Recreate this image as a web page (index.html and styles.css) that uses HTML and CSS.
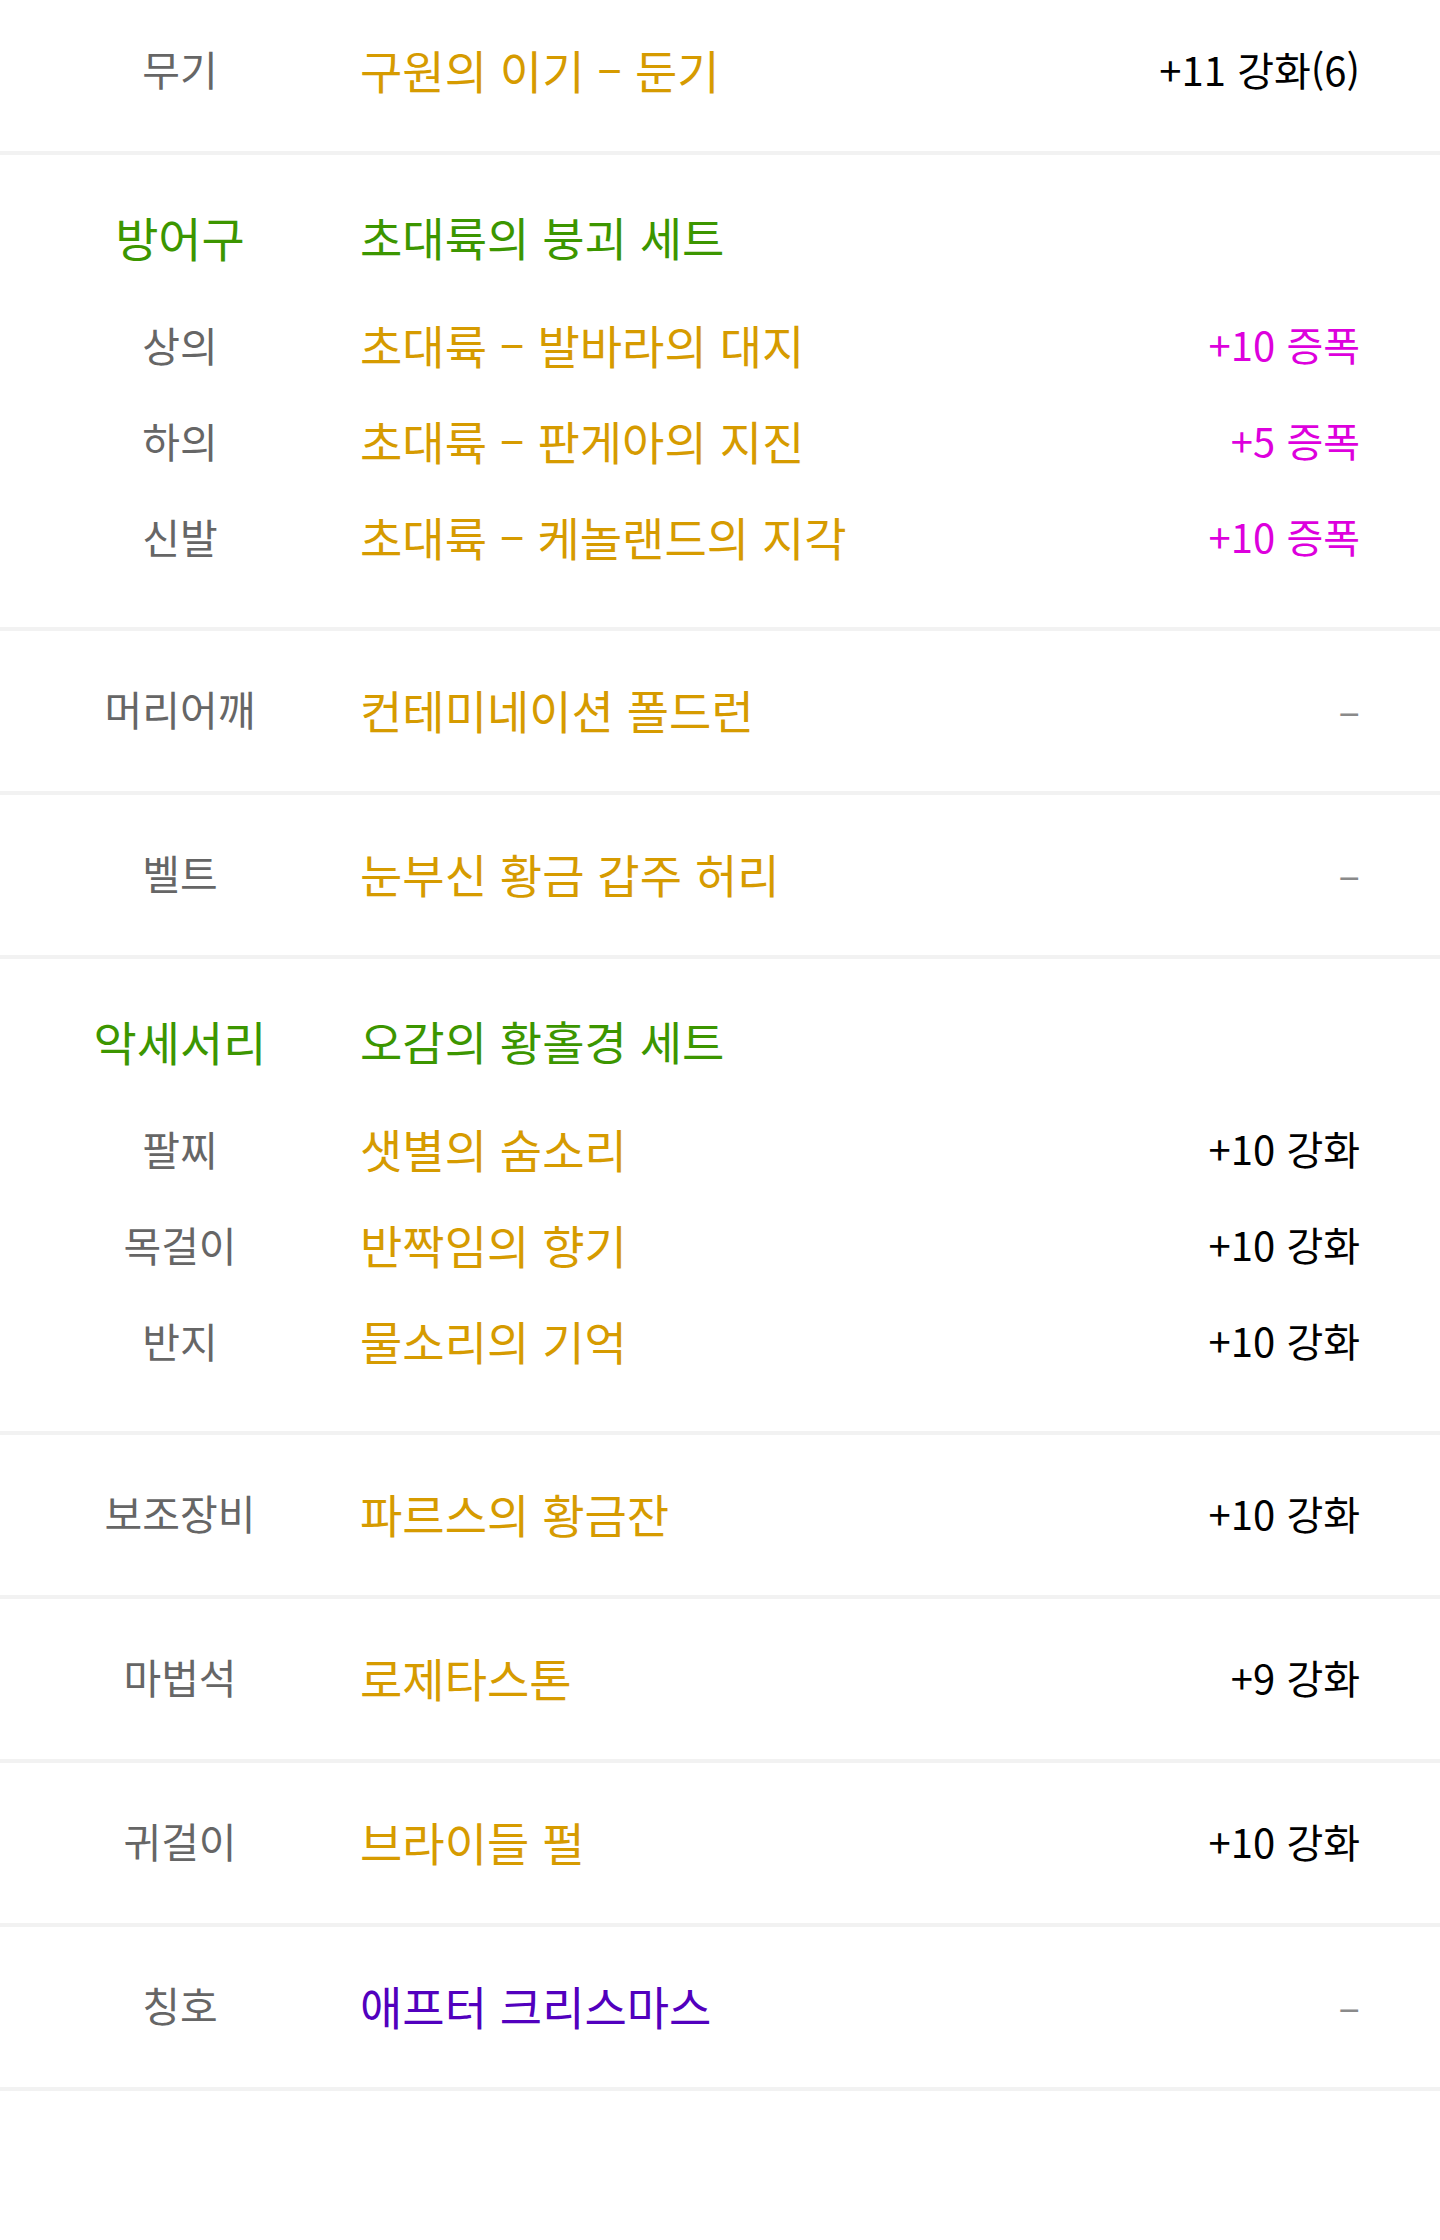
FILE: index.html
```html
<!DOCTYPE html>
<html lang="ko">
<head>
<meta charset="UTF-8">
<meta name="viewport" content="width=device-width, initial-scale=1.0">
<title>장비 목록</title>
<link rel="stylesheet" href="styles.css">
</head>
<body>

  <div class="equip-list">

    <div class="slot">
      <span class="slot-label">무기</span>
      <span class="item-name">구원의 이기 – 둔기</span>
      <span class="item-value">+11 강화(6)</span>
    </div>

    <div class="set-group">
      <div class="set-head">
        <span class="set-label">방어구</span>
        <span class="set-name">초대륙의 붕괴 세트</span>
      </div>
      <div class="set-row">
        <span class="slot-label">상의</span>
        <span class="item-name">초대륙 – 발바라의 대지</span>
        <span class="item-value amplify">+10 증폭</span>
      </div>
      <div class="set-row">
        <span class="slot-label">하의</span>
        <span class="item-name">초대륙 – 판게아의 지진</span>
        <span class="item-value amplify">+5 증폭</span>
      </div>
      <div class="set-row">
        <span class="slot-label">신발</span>
        <span class="item-name">초대륙 – 케놀랜드의 지각</span>
        <span class="item-value amplify">+10 증폭</span>
      </div>
    </div>

    <div class="slot">
      <span class="slot-label">머리어깨</span>
      <span class="item-name">컨테미네이션 폴드런</span>
      <span class="item-value empty">–</span>
    </div>

    <div class="slot">
      <span class="slot-label">벨트</span>
      <span class="item-name">눈부신 황금 갑주 허리</span>
      <span class="item-value empty">–</span>
    </div>

    <div class="set-group">
      <div class="set-head">
        <span class="set-label">악세서리</span>
        <span class="set-name">오감의 황홀경 세트</span>
      </div>
      <div class="set-row">
        <span class="slot-label">팔찌</span>
        <span class="item-name">샛별의 숨소리</span>
        <span class="item-value">+10 강화</span>
      </div>
      <div class="set-row">
        <span class="slot-label">목걸이</span>
        <span class="item-name">반짝임의 향기</span>
        <span class="item-value">+10 강화</span>
      </div>
      <div class="set-row">
        <span class="slot-label">반지</span>
        <span class="item-name">물소리의 기억</span>
        <span class="item-value">+10 강화</span>
      </div>
    </div>

    <div class="slot">
      <span class="slot-label">보조장비</span>
      <span class="item-name">파르스의 황금잔</span>
      <span class="item-value">+10 강화</span>
    </div>

    <div class="slot">
      <span class="slot-label">마법석</span>
      <span class="item-name">로제타스톤</span>
      <span class="item-value">+9 강화</span>
    </div>

    <div class="slot">
      <span class="slot-label">귀걸이</span>
      <span class="item-name">브라이들 펄</span>
      <span class="item-value">+10 강화</span>
    </div>

    <div class="slot">
      <span class="slot-label">칭호</span>
      <span class="item-name title">애프터 크리스마스</span>
      <span class="item-value empty">–</span>
    </div>

  </div>

</body>
</html>
```

FILE: styles.css
```css
* {
  box-sizing: border-box;
  margin: 0;
  padding: 0;
}

body {
  font-family: "Noto Sans CJK KR", "Noto Sans", sans-serif;
  background-color: #fff;
  color: #000;
}

/* List */

.equip-list {
  margin-top: -9px;
}

.slot,
.set-row,
.set-head {
  display: grid;
  grid-template-columns: 360px 1fr auto;
  align-items: center;
  padding-right: 80px;
  padding-bottom: 6px;
  line-height: 1;
}

.slot {
  height: 164px;
  padding-bottom: 5px;
  border-bottom: 4px solid #f2f2f2;
}

/* Set groups */

.set-group {
  padding: 36px 0 40px;
  border-bottom: 4px solid #f2f2f2;
}

.set-head {
  height: 96px;
  margin-bottom: 12px;
}

.set-row {
  height: 96px;
}

/* Text */

.slot-label {
  text-align: center;
  font-size: 41px;
  color: #666;
}

.set-label {
  text-align: center;
  font-size: 47px;
  color: #3c9600;
}

.set-name {
  font-size: 46px;
  color: #3c9600;
}

.item-name {
  font-size: 46px;
  color: #d69b00;
}

.item-name.title {
  color: #5200be;
}

.item-value {
  font-size: 40px;
  text-align: right;
  color: #000;
}

.item-value.amplify {
  color: #dd00dd;
}

.item-value.empty {
  color: #8a8a8a;
}
```
